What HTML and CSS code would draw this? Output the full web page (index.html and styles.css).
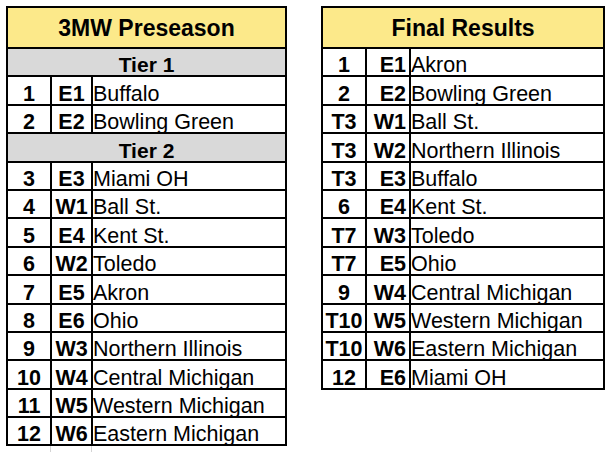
FILE: index.html
```html
<!DOCTYPE html>
<html>
<head>
<meta charset="utf-8">
<link rel="stylesheet" href="styles.css">
</head>
<body>
<div class="sheet">
  <div class="stack">
    <table class="board pre">
      <colgroup><col class="c-rank"><col class="c-code-pre"><col class="c-team"></colgroup>
      <tr><th colspan="3" class="title">3MW Preseason</th></tr>
      <tr><th colspan="3" class="tier">Tier 1</th></tr>
      <tr><td class="rank">1</td><td class="code">E1</td><td class="team">Buffalo</td></tr>
      <tr><td class="rank">2</td><td class="code">E2</td><td class="team">Bowling Green</td></tr>
      <tr><th colspan="3" class="tier">Tier 2</th></tr>
      <tr><td class="rank">3</td><td class="code">E3</td><td class="team">Miami OH</td></tr>
      <tr><td class="rank">4</td><td class="code">W1</td><td class="team">Ball St.</td></tr>
      <tr><td class="rank">5</td><td class="code">E4</td><td class="team">Kent St.</td></tr>
      <tr><td class="rank">6</td><td class="code">W2</td><td class="team">Toledo</td></tr>
      <tr><td class="rank">7</td><td class="code">E5</td><td class="team">Akron</td></tr>
      <tr><td class="rank">8</td><td class="code">E6</td><td class="team">Ohio</td></tr>
      <tr><td class="rank">9</td><td class="code">W3</td><td class="team">Northern Illinois</td></tr>
      <tr><td class="rank">10</td><td class="code">W4</td><td class="team">Central Michigan</td></tr>
      <tr><td class="rank">11</td><td class="code">W5</td><td class="team">Western Michigan</td></tr>
      <tr><td class="rank">12</td><td class="code">W6</td><td class="team">Eastern Michigan</td></tr>
    </table>
    <div class="gridlines"></div>
  </div>
  <table class="board final">
    <colgroup><col class="c-rank"><col class="c-code-final"><col class="c-team"></colgroup>
    <tr><th colspan="3" class="title">Final Results</th></tr>
    <tr><td class="rank">1</td><td class="code">E1</td><td class="team">Akron</td></tr>
    <tr><td class="rank">2</td><td class="code">E2</td><td class="team">Bowling Green</td></tr>
    <tr><td class="rank">T3</td><td class="code">W1</td><td class="team">Ball St.</td></tr>
    <tr><td class="rank">T3</td><td class="code">W2</td><td class="team">Northern Illinois</td></tr>
    <tr><td class="rank">T3</td><td class="code">E3</td><td class="team">Buffalo</td></tr>
    <tr><td class="rank">6</td><td class="code">E4</td><td class="team">Kent St.</td></tr>
    <tr><td class="rank">T7</td><td class="code">W3</td><td class="team">Toledo</td></tr>
    <tr><td class="rank">T7</td><td class="code">E5</td><td class="team">Ohio</td></tr>
    <tr><td class="rank">9</td><td class="code">W4</td><td class="team">Central Michigan</td></tr>
    <tr><td class="rank">T10</td><td class="code">W5</td><td class="team">Western Michigan</td></tr>
    <tr><td class="rank">T10</td><td class="code">W6</td><td class="team">Eastern Michigan</td></tr>
    <tr><td class="rank">12</td><td class="code">E6</td><td class="team">Miami OH</td></tr>
  </table>
</div>
</body>
</html>
```
FILE: styles.css
```css
html, body {
  margin: 0;
  padding: 0;
  background: #ffffff;
}

body {
  font-family: "Liberation Sans", Arial, Helvetica, sans-serif;
  color: #000000;
}

.sheet {
  display: flex;
  align-items: flex-start;
  gap: 34px;
  padding: 6px 0 0 6px;
}

.stack {
  display: flex;
  flex-direction: column;
}

.board {
  table-layout: fixed;
  border-collapse: separate;
  border-spacing: 2px;
  background: #000000;
}

.pre { width: 281px; }
.final { width: 284px; }

.c-rank { width: 42px; }
.c-code-pre { width: 39px; }
.c-code-final { width: 42px; }
.c-team { width: 192px; }

.board th,
.board td {
  box-sizing: border-box;
  padding: 0;
  white-space: nowrap;
}

.title {
  height: 39px;
  background: #fce98a;
  font-size: 23px;
  font-weight: bold;
  text-align: center;
  vertical-align: middle;
  line-height: 24px;
}

.tier {
  height: 26.4px;
  background: #d9d9d9;
  font-size: 21px;
  font-weight: bold;
  text-align: center;
  vertical-align: bottom;
  line-height: 20px;
}

.board td {
  height: 26.4px;
  background: #ffffff;
  font-size: 21.5px;
  vertical-align: bottom;
  line-height: 20px;
}

.rank {
  font-weight: bold;
  text-align: center;
}

.code {
  font-weight: bold;
  text-align: center;
}

.final .code {
  text-align: right;
  padding-right: 3px;
}

.team {
  text-align: left;
  padding-left: 4px;
}

.gridlines {
  height: 8px;
  width: 40px;
  margin-left: 44px;
  border-left: 1px solid #d4d4d4;
  border-right: 1px solid #d4d4d4;
}
```
